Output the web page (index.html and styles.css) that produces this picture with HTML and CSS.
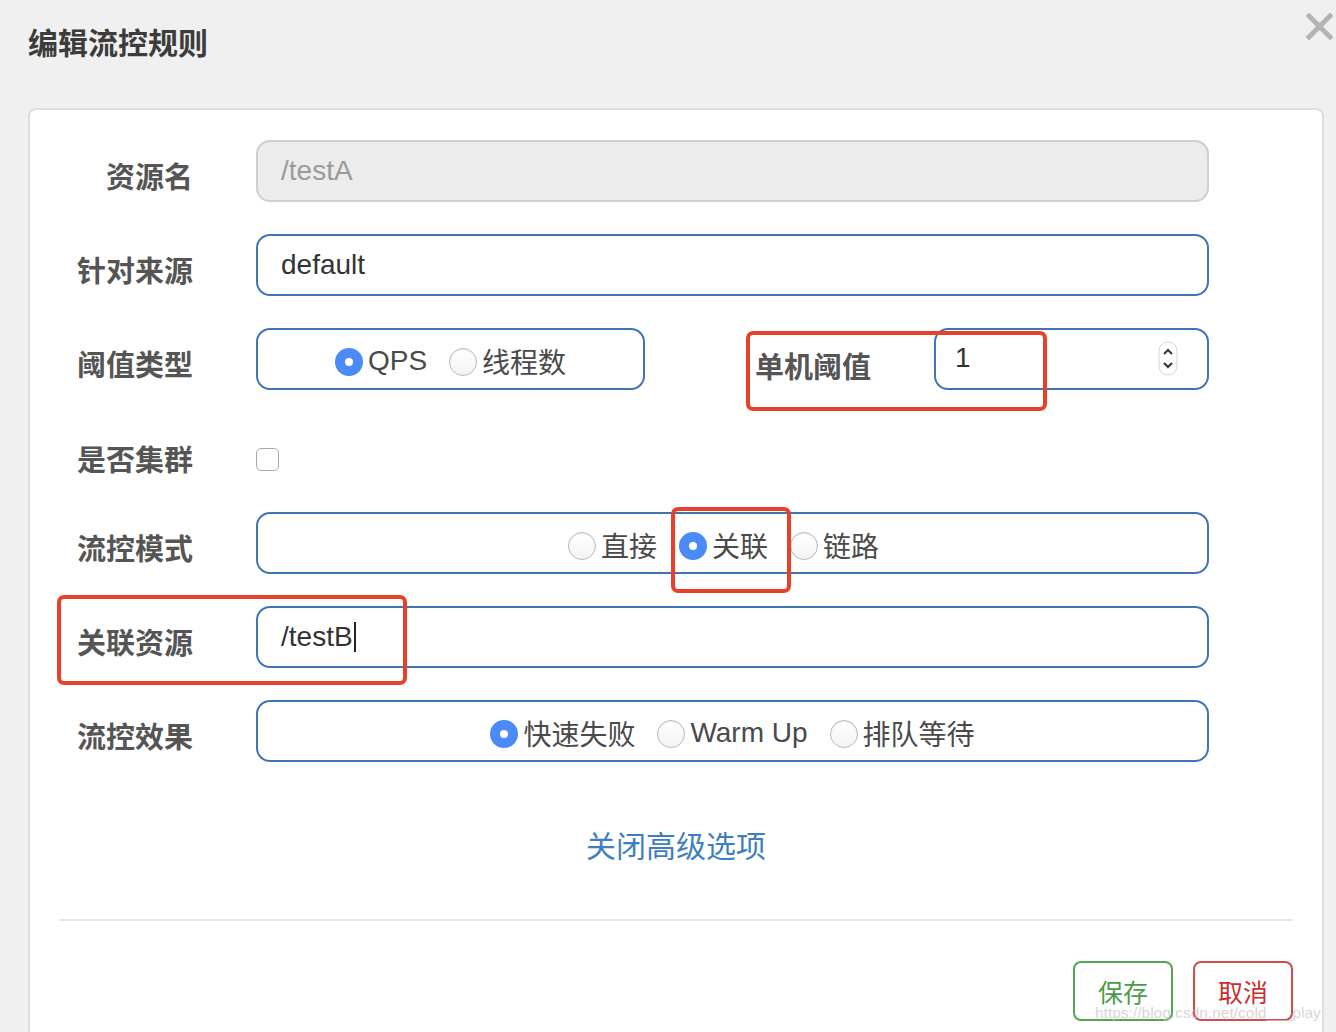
FILE: index.html
```html
<!DOCTYPE html>
<html lang="zh">
<head>
<meta charset="utf-8">
<link rel="stylesheet" href="styles.css">
</head>
<body>
<div class="modal">
  <div class="modal-header">
    <h2 class="title">编辑流控规则</h2>
    <svg class="close" width="27" height="27" viewBox="0 0 27 27"><path d="M3 3 L24 24 M24 3 L3 24" stroke="#b4b4b4" stroke-width="5" stroke-linecap="square"/></svg>
  </div>
  <div class="card">
    <div class="row">
      <div class="label">资源名</div>
      <div class="control input disabled">/testA</div>
    </div>
    <div class="row">
      <div class="label">针对来源</div>
      <div class="control input">default</div>
    </div>
    <div class="row">
      <div class="label">阈值类型</div>
      <div class="split">
        <div class="control group small">
          <span class="radio on"></span><span class="opt">QPS</span>
          <span class="radio"></span><span class="opt">线程数</span>
        </div>
        <div class="label label2">单机阈值</div>
        <div class="control input num">1
          <svg class="spin" width="20" height="35" viewBox="0 0 20 35"><rect x="1" y="1" width="18" height="33" rx="9" fill="#fff" stroke="#d4d4d4"/><path d="M6 13 L10 9 L14 13 M6 22 L10 26 L14 22" fill="none" stroke="#333" stroke-width="2"/></svg>
        </div>
      </div>
    </div>
    <div class="row row-check">
      <div class="label">是否集群</div>
      <span class="check"></span>
    </div>
    <div class="row">
      <div class="label">流控模式</div>
      <div class="control group mode">
        <span class="radio"></span><span class="opt">直接</span>
        <span class="radio on"></span><span class="opt">关联</span>
        <span class="radio"></span><span class="opt">链路</span>
      </div>
    </div>
    <div class="row">
      <div class="label">关联资源</div>
      <div class="control input">/testB<span class="caret"></span></div>
    </div>
    <div class="row">
      <div class="label">流控效果</div>
      <div class="control group">
        <span class="radio on"></span><span class="opt">快速失败</span>
        <span class="radio"></span><span class="opt">Warm Up</span>
        <span class="radio"></span><span class="opt">排队等待</span>
      </div>
    </div>
    <div class="link">关闭高级选项</div>
    <div class="divider"></div>
    <div class="footer">
      <span class="btn save">保存</span>
      <span class="btn cancel">取消</span>
    </div>
    <div class="mark m1"></div>
    <div class="mark m2"></div>
    <div class="mark m3"></div>
  </div>
  <div class="watermark">https://blog.csdn.net/cold___play</div>
</div>
</body>
</html>
```
FILE: styles.css
```css
html, body {
  margin: 0;
  padding: 0;
  background: #f0f0f0;
  height: 1032px;
  overflow: hidden;
  font-family: "Liberation Sans", "Noto Sans CJK SC", sans-serif;
  color: #555;
}
.modal {
  position: relative;
  padding: 0 12px 0 28px;
}
.modal-header {
  position: relative;
  height: 108px;
}
.title {
  margin: 0;
  padding-top: 26px;
  font-size: 30px;
  line-height: 36px;
  font-weight: bold;
  color: #3c3c3c;
}
.close {
  position: absolute;
  right: -9px;
  top: 13px;
}
.card {
  position: relative;
  box-sizing: border-box;
  width: 1296px;
  height: 940px;
  background: #fff;
  border: 2px solid #dedede;
  border-bottom: none;
  border-radius: 8px 8px 0 0;
  padding: 30px 29px 0 29px;
}
.row {
  display: flex;
  align-items: center;
  gap: 63px;
  margin-bottom: 32px;
}
.label {
  width: 134px;
  flex: none;
  text-align: right;
  font-size: 29px;
  font-weight: bold;
  color: #555;
  padding-top: 8px;
}
.control {
  box-sizing: border-box;
  width: 953px;
  height: 62px;
  border: 2px solid #3f75b5;
  border-radius: 14px;
  font-size: 28px;
  color: #333;
}
.input {
  display: flex;
  align-items: center;
  padding-left: 23px;
}
.input.disabled {
  background: #ececec;
  border-color: #cfcfcf;
  color: #9a9a9a;
}
.caret {
  display: inline-block;
  width: 2px;
  height: 30px;
  background: #222;
  margin-left: 1px;
}
.split {
  display: flex;
  align-items: center;
  width: 953px;
}
.group {
  display: flex;
  align-items: center;
  justify-content: center;
  color: #4a4a4a;
}
.group.small {
  width: 389px;
}
.group.mode {
  padding-right: 18px;
}
.label2 {
  width: 226px;
  margin-right: 63px;
  text-align: right;
  padding-top: 12px;
}
.num {
  width: 275px;
  position: relative;
  padding-left: 19px;
  padding-bottom: 2px;
}
.spin {
  position: absolute;
  right: 29px;
  top: 11px;
}
.radio {
  box-sizing: border-box;
  width: 28px;
  height: 28px;
  border-radius: 50%;
  border: 1px solid #b9b9b9;
  background: linear-gradient(#fff, #f3f3f3);
  box-shadow: inset 0 1px 1px rgba(0,0,0,0.08);
  margin-right: 5px;
  margin-top: 6px;
  flex: none;
}
.radio.on {
  border: 10px solid #4a8bf5;
  background: #fff;
  box-shadow: none;
}
.opt {
  margin-right: 22px;
  padding-top: 3px;
}
.opt:last-child {
  margin-right: 0;
}
.row-check {
  height: 58px;
  margin-bottom: 32px;
  align-items: center;
  padding-top: 14px;
  box-sizing: border-box;
}
.row-check .label {
  padding-top: 0;
}
.check {
  box-sizing: border-box;
  width: 23px;
  height: 23px;
  border: 1px solid #a8a8a8;
  border-radius: 5px;
  background: #fff;
  margin-top: 2px;
}
.link {
  text-align: center;
  font-size: 30px;
  color: #3f7fc1;
  margin-top: 67px;
  line-height: 36px;
}
.divider {
  height: 2px;
  background: #e6e6e6;
  margin-top: 54px;
}
.footer {
  display: flex;
  justify-content: flex-end;
  gap: 20px;
  margin-top: 40px;
}
.btn {
  box-sizing: border-box;
  width: 100px;
  height: 60px;
  border: 2px solid;
  border-radius: 8px;
  display: flex;
  align-items: center;
  justify-content: center;
  font-size: 25px;
}
.save {
  border-color: #52a852;
  color: #4a9c4a;
}
.cancel {
  border-color: #d24a4a;
  color: #c9302c;
}
.mark {
  position: absolute;
  border: 4px solid #e8412a;
  border-radius: 7px;
  box-sizing: border-box;
}
.m1 {
  left: 716px;
  top: 221px;
  width: 301px;
  height: 80px;
}
.m2 {
  left: 641px;
  top: 397px;
  width: 120px;
  height: 86px;
}
.m3 {
  left: 27px;
  top: 485px;
  width: 350px;
  height: 90px;
}
.watermark {
  position: absolute;
  left: 1095px;
  top: 1004px;
  font-size: 15.5px;
  color: rgba(200, 200, 200, 0.75);
  white-space: nowrap;
}
```
